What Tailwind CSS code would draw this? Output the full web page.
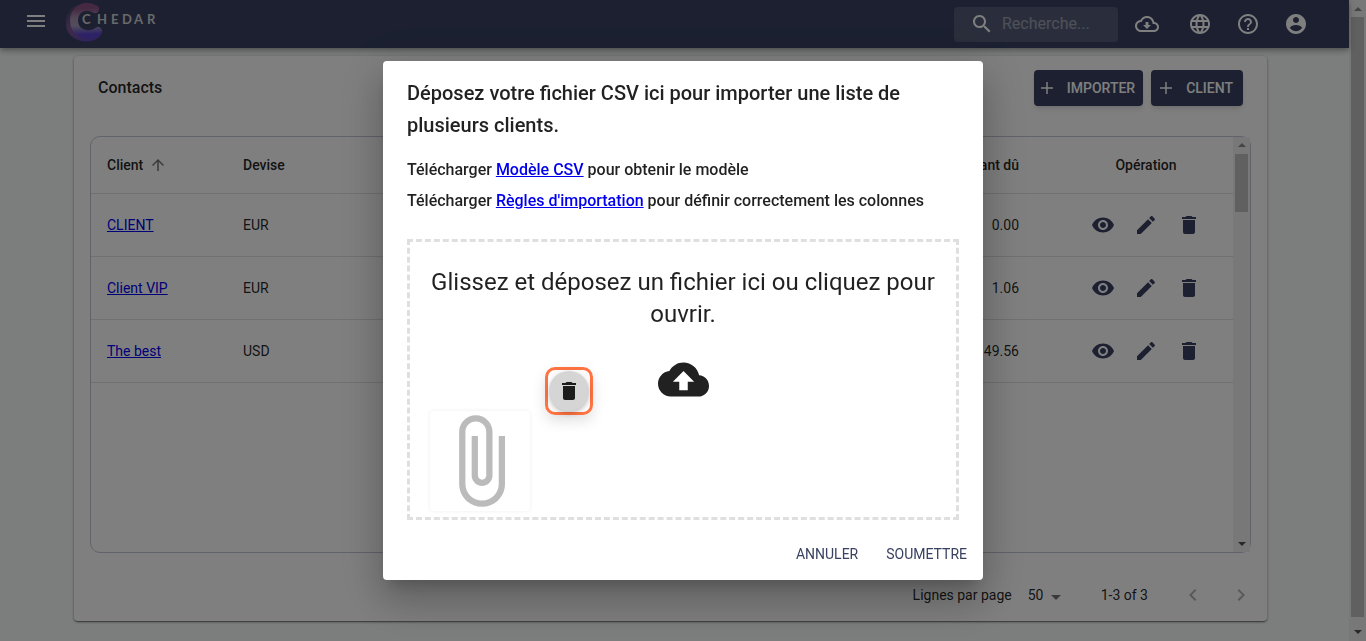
<!DOCTYPE html>
<html lang="fr">
<head>
    <meta charset="UTF-8">
    <meta name="viewport" content="width=device-width, initial-scale=1.0">
    <title>Chedar - Contacts</title>
    <script src="https://cdn.jsdelivr.net/npm/@tailwindcss/browser@4"></script>
</head>
<body class="font-[Roboto,sans-serif] text-sm text-black/87 bg-[#f9fdfb] overflow-hidden">
    <!-- icons -->
    <svg class="hidden">
        <symbol id="eye" viewBox="0 0 24 24"><path d="M12 4.5C7 4.5 2.73 7.61 1 12c1.73 4.39 6 7.5 11 7.5s9.27-3.11 11-7.5c-1.73-4.39-6-7.5-11-7.5zM12 17c-2.76 0-5-2.24-5-5s2.24-5 5-5 5 2.24 5 5-2.24 5-5 5zm0-8c-1.66 0-3 1.34-3 3s1.34 3 3 3 3-1.34 3-3-1.34-3-3-3z"/></symbol>
        <symbol id="edit" viewBox="0 0 24 24"><path d="M3 17.25V21h3.75L17.81 9.94l-3.75-3.75L3 17.25zM20.71 7.04c.39-.39.39-1.02 0-1.41l-2.34-2.34c-.39-.39-1.02-.39-1.41 0l-1.83 1.83 3.75 3.75 1.83-1.83z"/></symbol>
        <symbol id="trash" viewBox="0 0 24 24"><path d="M6 19c0 1.1.9 2 2 2h8c1.1 0 2-.9 2-2V7H6v12zM19 4h-3.5l-1-1h-5l-1 1H5v2h14V4z"/></symbol>
        <symbol id="plus" viewBox="0 0 24 24"><path d="M20 13h-7v7h-2v-7H4v-2h7V4h2v7h7v2z"/></symbol>
    </svg>

    <div class="flex h-screen">
        <div class="flex-1 min-w-0 flex flex-col">
            <header class="h-12 shrink-0 bg-[#384161] text-white flex items-center pl-6 pr-[41px] shadow-[0_2px_4px_-1px_rgba(0,0,0,0.2),0_4px_5px_rgba(0,0,0,0.14),0_1px_10px_rgba(0,0,0,0.12)] relative">
                <button aria-label="Menu" class="mb-1.5">
                    <svg class="size-6" viewBox="0 0 24 24" fill="currentColor"><path d="M3 18h18v-2H3v2zm0-5h18v-2H3v2zm0-7v2h18V6H3z"/></svg>
                </button>
                <a href="#" aria-label="Chedar" class="ml-4">
                    <svg class="w-28 h-12" viewBox="0 0 112 48">
                        <defs>
                            <linearGradient id="outer" gradientUnits="userSpaceOnUse" x1="6" y1="6" x2="32" y2="40">
                                <stop offset="0" stop-color="#3f4466"/>
                                <stop offset="0.4" stop-color="#7c5590"/>
                                <stop offset="1" stop-color="#5a44c4"/>
                            </linearGradient>
                            <linearGradient id="inner" gradientUnits="userSpaceOnUse" x1="33" y1="8" x2="34" y2="34">
                                <stop offset="0" stop-color="#8a5286"/>
                                <stop offset="0.35" stop-color="#a58fae"/>
                                <stop offset="0.65" stop-color="#a29bb8"/>
                                <stop offset="1" stop-color="#5a44cc"/>
                            </linearGradient>
                        </defs>
                        <path d="M12 9C1 17 3 37 21 38C27 38 32 36 34 33" fill="none" stroke="url(#outer)" stroke-width="7" stroke-linecap="round"/>
                        <path d="M31 9C20 3 10 10 10 20.500C10 33 24 38 34 31" fill="none" stroke="url(#inner)" stroke-width="8" stroke-linecap="round"/>
                        <text y="24" x="18 33 47 58 70 83" font-size="13" font-weight="700" font-family="Lato, sans-serif" fill="#d2d2d2">CHEDAR</text>
                    </svg>
                </a>
                <label class="ml-auto h-[35px] w-[164px] rounded bg-white/15 flex items-center pl-4 mr-[17px]">
                    <svg class="size-6 shrink-0" viewBox="0 0 24 24" fill="currentColor"><path d="M15.500 14h-.79l-.28-.27C15.410 12.590 16 11.110 16 9.500 16 5.910 13.090 3 9.500 3S3 5.910 3 9.500 5.910 16 9.500 16c1.610 0 3.090-.59 4.230-1.570l.27.28v.79l5 4.990L20.490 19l-4.990-5zm-6 0C7.010 14 5 11.990 5 9.500S7.010 5 9.500 5 14 7.010 14 9.500 11.990 14 9.500 14z"/></svg>
                    <input type="text" aria-label="Recherche" placeholder="Recherche..." class="ml-2 w-full min-w-0 text-base placeholder:text-white/42">
                </label>
                <div class="flex items-center gap-6">
                    <button aria-label="Télécharger" class="mr-[5px]">
                        <svg class="size-6" viewBox="0 0 24 24" fill="currentColor"><path d="M19.350 10.040C18.670 6.590 15.640 4 12 4 9.110 4 6.600 5.640 5.350 8.040 2.340 8.360 0 10.910 0 14c0 3.310 2.690 6 6 6h13c2.760 0 5-2.240 5-5 0-2.640-2.050-4.780-4.650-4.960zM19 18H6c-2.210 0-4-1.790-4-4 0-2.050 1.530-3.760 3.560-3.970l1.070-.11.5-.95C8.080 7.140 9.940 6 12 6c2.620 0 4.880 1.860 5.390 4.430l.3 1.500 1.530.11c1.560.1 2.780 1.410 2.780 2.960 0 1.650-1.350 3-3 3zm-5.550-8h-2.900v3H8l4 4 4-4h-2.550z"/></svg>
                    </button>
                    <button aria-label="Langue">
                        <svg class="size-6" viewBox="0 0 24 24" fill="currentColor"><path d="M11.990 2C6.470 2 2 6.480 2 12s4.470 10 9.990 10C17.520 22 22 17.520 22 12S17.520 2 11.990 2zm6.930 6h-2.950c-.32-1.250-.78-2.450-1.380-3.560 1.840.63 3.370 1.910 4.330 3.560zM12 4.040c.83 1.200 1.480 2.530 1.910 3.960h-3.820c.43-1.430 1.080-2.760 1.910-3.960zM4.260 14C4.100 13.360 4 12.690 4 12s.1-1.360.26-2h3.380c-.08.66-.14 1.320-.14 2s.06 1.340.14 2H4.260zm.82 2h2.950c.32 1.250.78 2.450 1.380 3.560-1.840-.63-3.370-1.900-4.330-3.560zm2.950-8H5.080c.96-1.660 2.490-2.930 4.330-3.560C8.810 5.550 8.350 6.750 8.030 8zM12 19.960c-.83-1.200-1.480-2.530-1.910-3.960h3.820c-.43 1.430-1.080 2.760-1.910 3.960zM14.340 14H9.660c-.09-.66-.16-1.320-.16-2s.07-1.350.16-2h4.680c.09.65.16 1.320.16 2s-.07 1.340-.16 2zm.25 5.560c.6-1.110 1.060-2.310 1.380-3.560h2.950c-.96 1.650-2.490 2.930-4.330 3.560zM16.360 14c.08-.66.14-1.320.14-2s-.06-1.340-.14-2h3.380c.16.64.26 1.310.26 2s-.1 1.360-.26 2h-3.380z"/></svg>
                    </button>
                    <button aria-label="Aide">
                        <svg class="size-6" viewBox="0 0 24 24" fill="currentColor"><path d="M11 18h2v-2h-2v2zm1-16C6.480 2 2 6.480 2 12s4.480 10 10 10 10-4.480 10-10S17.520 2 12 2zm0 18c-4.410 0-8-3.590-8-8s3.590-8 8-8 8 3.590 8 8-3.590 8-8 8zm0-14c-2.210 0-4 1.790-4 4h2c0-1.100.9-2 2-2s2 .9 2 2c0 2-3 1.750-3 5h2c0-2.250 3-2.500 3-5 0-2.210-1.790-4-4-4z"/></svg>
                    </button>
                    <button aria-label="Compte">
                        <svg class="size-6" viewBox="0 0 24 24" fill="currentColor"><path d="M12 2C6.480 2 2 6.480 2 12s4.480 10 10 10 10-4.480 10-10S17.520 2 12 2zm0 3c1.660 0 3 1.340 3 3s-1.340 3-3 3-3-1.340-3-3 1.340-3 3-3zm0 14.200c-2.500 0-4.710-1.280-6-3.220.03-1.990 4-3.080 6-3.080 1.990 0 5.970 1.090 6 3.080-1.290 1.940-3.500 3.220-6 3.220z"/></svg>
                    </button>
                </div>
            </header>

            <main class="flex-1 min-h-0 flex flex-col mt-2 mb-5 ml-[74px] mr-[82px] bg-white rounded shadow-[0_2px_1px_-1px_rgba(0,0,0,0.2),0_1px_1px_rgba(0,0,0,0.14),0_1px_3px_rgba(0,0,0,0.4)]">
                <div class="flex items-center gap-2 px-6 pt-3.5 pb-[30px]">
                    <h1 class="text-base font-medium mr-auto">Contacts</h1>
                    <button class="h-9 flex items-center pl-1 pr-2 rounded bg-[#384161] text-white font-medium shadow-md"><svg class="size-[18px] mr-[11px]" fill="currentColor"><use href="#plus"/></svg>IMPORTER</button>
                    <button class="h-9 flex items-center px-1.5 pr-2.5 rounded bg-[#384161] text-white font-medium shadow-md"><svg class="size-[18px] mr-[11px]" fill="currentColor"><use href="#plus"/></svg>CLIENT</button>
                </div>

                <div class="flex-1 min-h-0 mx-4 flex border border-[#c0c6d2] rounded-[10px]">
                    <div class="flex-1 overflow-hidden">
                        <table class="w-full table-fixed">
                            <thead>
                                <tr class="h-14 border-b border-[#e0e0e0]">
                                    <th class="w-[136px] pl-4 text-left font-medium">
                                        <span class="flex items-center gap-1.5">Client
                                            <svg class="size-[18px] text-black/55" viewBox="0 0 24 24" fill="currentColor"><path d="M4 12l1.410 1.410L11 7.830V20h2V7.830l5.580 5.590L20 12l-8-8-8 8z"/></svg>
                                        </span>
                                    </th>
                                    <th class="pl-4 text-left font-medium">Devise</th>
                                    <th class="pr-10 text-right font-medium">Montant dû</th>
                                    <th class="w-[174px] text-center font-medium">Opération</th>
                                </tr>
                            </thead>
                            <tbody id="clients"></tbody>
                        </table>
                    </div>
                    <div class="w-[17px] bg-[#f1f1f1] flex flex-col items-center py-1.5">
                        <svg class="w-2 h-1" viewBox="0 0 8 4"><path d="M0 4L4 0L8 4Z" fill="#8a8a8a"/></svg>
                        <div class="w-[13px] h-[58px] mt-[7px] bg-[#c1c1c1]"></div>
                        <svg class="w-2 h-1 mt-auto" viewBox="0 0 8 4"><path d="M0 0L4 4L8 0Z" fill="#505050"/></svg>
                    </div>
                </div>

                <div class="h-[68px] shrink-0 flex items-center justify-end pt-4 pr-0.5">
                    <label for="rows" class="mr-4">Lignes par page</label>
                    <div class="relative mr-[33px]">
                        <select id="rows" class="appearance-none w-10 bg-transparent"><option>50</option></select>
                        <svg class="size-6 absolute right-0 top-0 text-black/54 pointer-events-none" viewBox="0 0 24 24" fill="currentColor"><path d="M7 10l5 5 5-5z"/></svg>
                    </div>
                    <span>1-3 of 3</span>
                    <button aria-label="Page précédente" class="p-3 ml-[21px] text-black/30"><svg class="size-6" viewBox="0 0 24 24" fill="currentColor"><path d="M15.410 7.410L14 6l-6 6 6 6 1.410-1.410L10.830 12z"/></svg></button>
                    <button aria-label="Page suivante" class="p-3 text-black/30"><svg class="size-6" viewBox="0 0 24 24" fill="currentColor"><path d="M10 6L8.590 7.410 13.170 12l-4.580 4.590L10 18l6-6z"/></svg></button>
                </div>
            </main>
        </div>

        <div class="w-[17px] bg-[#f1f1f1] flex flex-col items-center py-[7px]">
            <svg class="w-2 h-1" viewBox="0 0 8 4"><path d="M0 4L4 0L8 4Z" fill="#8a8a8a"/></svg>
            <div class="w-[13px] flex-1 mt-1.5 mb-[13px] bg-[#c1c1c1]"></div>
            <svg class="w-2 h-1" viewBox="0 0 8 4"><path d="M0 0L4 4L8 0Z" fill="#505050"/></svg>
        </div>
    </div>

    <!-- import dialog -->
    <div class="fixed inset-0 bg-black/50 flex items-center justify-center">
        <div role="dialog" aria-labelledby="dialog-title" class="w-full max-w-[600px] bg-white rounded shadow-[0_11px_15px_-7px_rgba(0,0,0,0.2),0_24px_38px_3px_rgba(0,0,0,0.14),0_9px_46px_8px_rgba(0,0,0,0.12)]">
            <div class="px-6 pt-4">
                <h2 id="dialog-title" class="text-xl leading-8 font-medium">Déposez votre fichier CSV ici pour importer une liste de plusieurs clients.</h2>
                <div class="mt-[13px] text-base leading-[31px] font-medium">
                    <p>Télécharger <a href="#" class="text-[#0000ee] underline">Modèle CSV</a> pour obtenir le modèle</p>
                    <p>Télécharger <a href="#" class="text-[#0000ee] underline">Règles d'importation</a> pour définir correctement les colonnes</p>
                </div>
                <div class="mt-[23px] h-[281px] relative border-3 border-dashed border-[#dfdfdf] px-5 pt-6 text-center">
                    <p class="text-2xl leading-8">Glissez et déposez un fichier ici ou cliquez pour ouvrir.</p>
                    <svg class="size-[51px] mx-auto mt-6" viewBox="0 0 24 24" fill="#212121"><path d="M19.350 10.040C18.670 6.590 15.640 4 12 4 9.110 4 6.600 5.640 5.350 8.040 2.340 8.360 0 10.910 0 14c0 3.310 2.690 6 6 6h13c2.760 0 5-2.240 5-5 0-2.640-2.050-4.780-4.650-4.960zM14 13v4h-4v-4H7l5-5 5 5h-3z"/></svg>
                    <div class="absolute left-5 bottom-1.5 size-[100px] rounded shadow-[0_0_4px_rgba(0,0,0,0.07)]">
                        <svg class="size-full" viewBox="0 0 24 24" fill="#bbbbbb"><path d="M16.500 6v11.500c0 2.210-1.790 4-4 4s-4-1.790-4-4V5c0-1.380 1.120-2.500 2.500-2.500s2.500 1.120 2.500 2.500v10.500c0 .55-.45 1-1 1s-1-.45-1-1V6H10v9.500c0 1.380 1.120 2.500 2.500 2.500s2.500-1.120 2.500-2.500V5c0-2.210-1.790-4-4-4S7 2.790 7 5v12.500c0 3.040 2.460 5.500 5.500 5.500s5.500-2.460 5.500-5.500V6h-1.500z"/></svg>
                    </div>
                    <div class="absolute left-[135px] bottom-[102px] size-12 rounded-[10px] border-3 border-[#ff7442] flex items-center justify-center shadow-[0_6px_14px_rgba(0,0,0,0.12)]">
                        <button aria-label="Supprimer" class="size-10 shrink-0 rounded-full bg-[#d5d5d5] flex items-center justify-center shadow-[0_3px_5px_-1px_rgba(0,0,0,0.2),0_1px_8px_rgba(0,0,0,0.12)]">
                            <svg class="size-6" fill="#1c1c1c"><use href="#trash"/></svg>
                        </button>
                    </div>
                </div>
            </div>
            <div class="flex justify-end gap-3 p-2 pt-4 text-[#384161]">
                <button class="h-9 px-2">ANNULER</button>
                <button class="h-9 px-2">SOUMETTRE</button>
            </div>
        </div>
    </div>
</body>

<script>
    const clients = [
        { name: "CLIENT", currency: "EUR", due: "0.00" },
        { name: "Client VIP", currency: "EUR", due: "1.06" },
        { name: "The best", currency: "USD", due: "49.56" },
    ];

    document.querySelector('#clients').innerHTML = clients.map(c => `
        <tr class="h-[63px] border-b border-[#e0e0e0]">
            <td class="pl-4"><a href="#" class="text-[#0000ee] underline">${c.name}</a></td>
            <td class="pl-4">${c.currency}</td>
            <td class="pr-10 text-right">${c.due}</td>
            <td>
                <div class="flex justify-center gap-[19px] text-[#384161]">
                    <button aria-label="Voir"><svg class="size-6" fill="currentColor"><use href="#eye"/></svg></button>
                    <button aria-label="Modifier"><svg class="size-6" fill="currentColor"><use href="#edit"/></svg></button>
                    <button aria-label="Supprimer"><svg class="size-6" fill="currentColor"><use href="#trash"/></svg></button>
                </div>
            </td>
        </tr>`).join('');
</script>
</html>
